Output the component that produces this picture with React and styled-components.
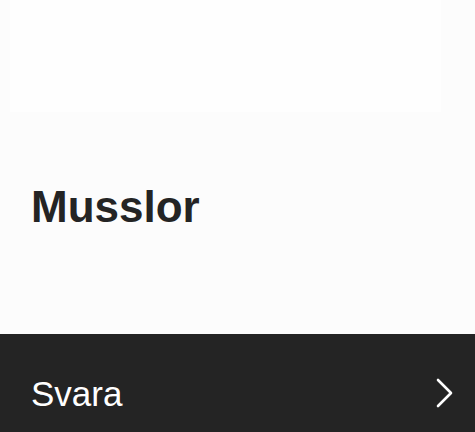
import React from "react";
import styled, { createGlobalStyle } from "styled-components";

const GlobalStyle = createGlobalStyle`
  html, body {
    margin: 0;
    padding: 0;
    background: #fcfcfc;
  }
  body {
    font-family: "Liberation Sans", Arial, sans-serif;
    overflow: hidden;
  }
`;

const Page = styled.div`
  width: 475px;
  height: 432px;
  display: flex;
  flex-direction: column;
  overflow: hidden;
`;

const Hero = styled.section`
  height: 334px;
  flex-shrink: 0;
  display: flex;
  flex-direction: column;
  background: #fcfcfc;
`;

const Picture = styled.div`
  height: 112px;
  margin: 0 34px 0 10px;
  background: #fefefe;
`;

const Title = styled.h1`
  margin: 69px 0 0 31px;
  font-size: 44px;
  line-height: 52px;
  font-weight: 700;
  color: #242424;
  letter-spacing: 0;
`;

const Action = styled.div`
  flex: 1;
  background: #242424;
  display: flex;
  align-items: flex-start;
  justify-content: space-between;
  padding: 40px 20px 0 31px;
  color: #ffffff;
`;

const Label = styled.span`
  font-size: 35px;
  line-height: 40px;
  font-weight: 400;
`;

const Chevron = styled.svg`
  width: 20px;
  height: 32px;
  margin-top: 3px;
`;

export default function App() {
  return (
    <Page>
      <GlobalStyle />
      <Hero>
        <Picture />
        <Title>Musslor</Title>
      </Hero>
      <Action>
        <Label>Svara</Label>
        <Chevron viewBox="0 0 20 32">
          <path d="M3 3 L16 16 L3 29" fill="none" stroke="#ffffff" strokeWidth="2.6" strokeLinecap="round" strokeLinejoin="round" />
        </Chevron>
      </Action>
    </Page>
  );
}
